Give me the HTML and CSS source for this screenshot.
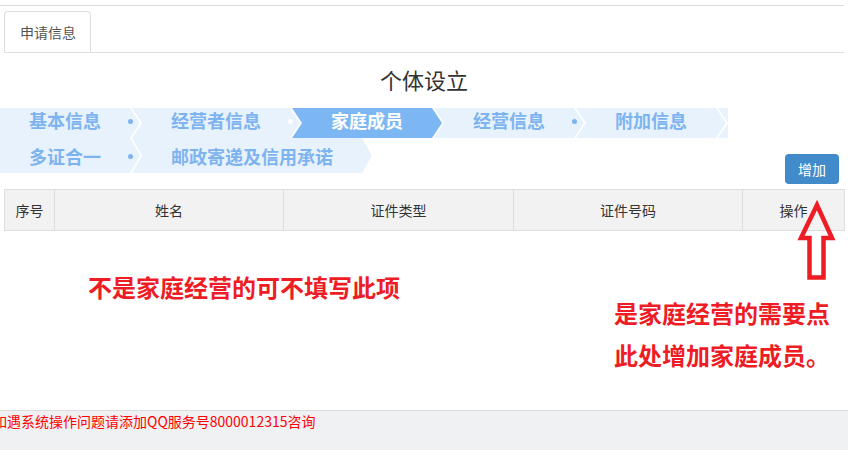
FILE: index.html
```html
<!DOCTYPE html>
<html lang="zh-CN">
<head>
<meta charset="utf-8">
<title>个体设立</title>
<link rel="stylesheet" href="styles.css">
</head>
<body>
<div class="page">
  <div class="topline"></div>
  <div class="tabs"><div class="tab">申请信息</div></div>
  <h1 class="title">个体设立</h1>
  <div class="steps">
    <div class="step-row row1">
      <div class="step first dot">基本信息</div>
      <div class="step dot dot-white">经营者信息</div>
      <div class="step active">家庭成员</div>
      <div class="step dot">经营信息</div>
      <div class="step">附加信息</div>
      <div class="step-tail"></div>
    </div>
    <div class="step-row row2">
      <div class="step first dot">多证合一</div>
      <div class="step">邮政寄递及信用承诺</div>
    </div>
  </div>
  <div class="toolbar"><button class="btn">增加</button></div>
  <table class="grid">
    <colgroup>
      <col class="c-no"><col class="c-name"><col class="c-type"><col class="c-id"><col class="c-op">
    </colgroup>
    <thead>
      <tr><th>序号</th><th>姓名</th><th>证件类型</th><th>证件号码</th><th>操作</th></tr>
    </thead>
  </table>
  <div class="notes">
    <div class="note note-left">不是家庭经营的可不填写此项</div>
    <div class="note note-right">是家庭经营的需要点<br>此处增加家庭成员。</div>
  </div>
  <svg class="arrow" width="52" height="90" viewBox="0 0 52 90">
    <path d="M27 10 L11 43 L19.5 43 L19.5 82.5 L33.5 82.5 L33.5 43 L42 43 Z" fill="none" stroke="#ee1c25" stroke-width="4.5" stroke-linejoin="miter"/>
  </svg>
</div>
<footer class="footer"><span class="footer-text">如遇系统操作问题请添加QQ服务号8000012315咨询</span></footer>
</body>
</html>
```

FILE: styles.css
```css
html, body {
  margin: 0;
  padding: 0;
  background: #fff;
  font-family: "Noto Sans CJK SC", "Noto Sans", sans-serif;
  color: #333;
}
.page {
  position: relative;
  width: 844px;
}
.topline {
  margin-top: 5px;
  height: 1px;
  background: #dddddd;
}
.tabs {
  margin-top: 5px;
  margin-left: 4px;
  display: flex;
  border-bottom: 1px solid #dddddd;
}
.tab {
  height: 40px;
  line-height: 40px;
  padding: 0 14px 0 15px;
  border: 1px solid #dddddd;
  border-bottom: none;
  border-radius: 4px 4px 0 0;
  font-size: 14px;
  color: #555;
  background: #fff;
}
.title {
  margin: 11px 0 14px;
  text-align: center;
  font-size: 22px;
  line-height: 30px;
  font-weight: normal;
  color: #333;
  padding-left: 4px;
}
.steps {
  display: flex;
  flex-direction: column;
}
.step-row {
  display: flex;
}
.step {
  position: relative;
  height: 30px;
  line-height: 25px;
  padding: 0 39px;
  margin-right: -8px;
  background: #e8f2fd;
  color: #7db4f0;
  font-size: 18px;
  font-weight: bold;
  white-space: nowrap;
  clip-path: polygon(0 0, calc(100% - 10px) 0, 100% 50%, calc(100% - 10px) 100%, 0 100%, 10px 50%);
}
.step.first {
  padding-left: 29px;
  clip-path: polygon(0 0, calc(100% - 10px) 0, 100% 50%, calc(100% - 10px) 100%, 0 100%);
}
.row2 .step {
  height: 35px;
  line-height: 36px;
}
.step.active {
  background: #7db7f3;
  color: #fff;
}
.step.dot::after {
  content: "";
  position: absolute;
  right: 7px;
  top: calc(50% - 4px);
  width: 5px;
  height: 5px;
  border-radius: 50%;
  background: #7db4f0;
}
.row2 .step.dot::after {
  top: calc(50% - 2px);
}
.step.dot-white::after {
  background: #ffffff;
}
.step-tail {
  width: 10px;
  height: 30px;
  background: #e8f2fd;
  clip-path: polygon(0 0, 100% 0, 100% 100%, 0 100%, 100% 50%);
}
.toolbar {
  display: flex;
  justify-content: flex-end;
  margin-top: -19px;
  margin-bottom: 5px;
  padding-right: 5px;
}
.btn {
  width: 54px;
  height: 30px;
  border: none;
  border-radius: 4px;
  background: #428bca;
  color: #fff;
  font-family: "Noto Sans CJK SC", sans-serif;
  font-size: 14px;
  line-height: 30px;
  padding: 0;
}
.grid {
  margin-left: 4px;
  width: 840px;
  border-collapse: collapse;
  table-layout: fixed;
}
.c-no { width: 50px; }
.c-name { width: 229px; }
.c-type { width: 230px; }
.c-id { width: 229px; }
.c-op { width: 102px; }
.grid th {
  height: 40px;
  padding: 0;
  border: 1px solid #dddddd;
  background: #f2f2f2;
  font-size: 14px;
  font-weight: normal;
  color: #333;
  text-align: center;
}
.notes {
  height: 179px;
  display: flex;
  align-items: flex-start;
}
.note {
  color: #ee1c25;
  font-size: 24px;
  font-weight: bold;
  line-height: 42px;
  white-space: nowrap;
}
.note-left {
  margin-top: 35px;
  margin-left: 88px;
}
.note-right {
  margin-top: 61px;
  margin-left: 214px;
}
.arrow {
  position: absolute;
  left: 790px;
  top: 190px;
}
.footer {
  height: 39px;
  border-top: 1px solid #dcdcdc;
  background: #f0f1f3;
  overflow: hidden;
}
.footer-text {
  display: block;
  margin-left: -7px;
  font-size: 14px;
  line-height: 20px;
  color: #ff0000;
  white-space: nowrap;
}
```
